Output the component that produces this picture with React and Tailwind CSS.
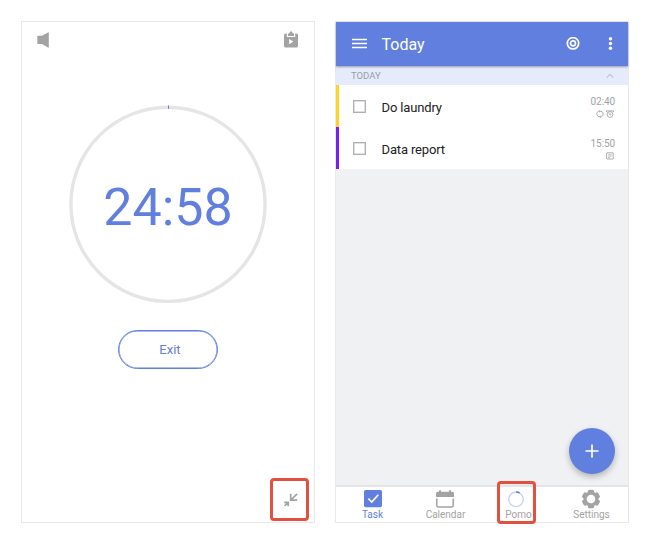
import React from "react";

function SpeakerIcon() {
  return (
    <svg width="12" height="16" viewBox="0 0 12 16" fill="#a3a3a3">
      <path d="M1 3.8h4L11 .4q.8-.3.8.5v14.2q0 .8-.8.4L5 12H1q-.7 0-.7-.7V4.5q0-.7.7-.7Z" />
    </svg>
  );
}

function ClipboardIcon() {
  return (
    <svg width="14" height="17" viewBox="0 0 14 17">
      <rect x="0" y="2.5" width="14" height="14" rx="1.6" fill="#a3a3a3" />
      <path d="M2.8 1.8h8.4v4.200H2.8Z" fill="#fff" />
      <path d="M4 5V3.2q0-1 1-1h.4Q5.600 .2 7 .2t1.600 2H9q1 0 1 1V5Z" fill="#a3a3a3" />
      <path d="M5.100 8v5.200L9.400 10.600Z" fill="#fff" />
    </svg>
  );
}

function CollapseIcon() {
  return (
    <svg width="15" height="15" viewBox="0 0 15 15" fill="none" stroke="#a3a3a3" strokeWidth="1.700">
      <path d="M7.700 .8v6.300h6.500M8 6.800L14.100 .8" />
      <path d="M1.200 9.300h4v4M5 9.500L1.600 12.900" />
    </svg>
  );
}

function GearIcon() {
  return (
    <svg width="20" height="20" viewBox="0 0 20 20">
      <g fill="#a3a3a3">
        <circle cx="10" cy="10" r="7.600" />
        {[0, 60, 120].map((angle) => (
          <rect key={angle} x="6.900" y=".8" width="6.200" height="18.400" rx="1.500" transform={`rotate(${angle} 10 10)`} />
        ))}
      </g>
      <circle cx="10" cy="10" r="4.300" fill="#fff" />
    </svg>
  );
}

function CalendarIcon() {
  return (
    <svg width="18" height="18" viewBox="0 0 18 18">
      <path d="M0 7V3.500q0-1.700 1.700-1.700H3V.3h2v1.500h8V.3h2v1.500h1.300q1.700 0 1.700 1.700V7Z" fill="#a3a3a3" />
      <path d="M.8 8.500v7q0 1.500 1.500 1.500h13.400q1.500 0 1.500-1.500v-7" fill="none" stroke="#a3a3a3" strokeWidth="1.500" />
    </svg>
  );
}

function TaskIcon() {
  return (
    <svg width="18" height="18" viewBox="0 0 18 18">
      <rect width="18" height="17.300" rx="1.700" fill="#617fde" />
      <path d="M4.300 8.500L7.800 12L14.300 4.800" fill="none" stroke="#fff" strokeWidth="1.700" />
    </svg>
  );
}

function PomoIcon() {
  return (
    <svg width="18" height="18" viewBox="0 0 18 18" fill="none" strokeWidth="1.400">
      <circle cx="9" cy="9.300" r="7.300" stroke="#c8d3f7" />
      <path d="M9 2A7.300 7.300 0 0 1 12.600 3" stroke="#617fde" strokeWidth="1.700" />
    </svg>
  );
}

function RepeatIcon() {
  return (
    <svg width="8" height="8" viewBox="0 0 8 8" fill="none" stroke="#a3a3a3" strokeWidth=".9">
      <path d="M3 6.900A3.100 3.100 0 0 1 2.300 1.300H4.400M5 1.100A3.100 3.100 0 0 1 5.700 6.700H3.600M3.500.3l1 1-1 1M4.500 5.700l-1 1 1 1" />
    </svg>
  );
}

function AlarmIcon() {
  return (
    <svg width="8" height="8" viewBox="0 0 8 8" fill="none" stroke="#a3a3a3" strokeWidth=".9">
      <circle cx="4" cy="4.500" r="2.900" />
      <path d="M.5 2.100V.9h2.400M7.500 2.100V.9H5.100M2.800 .9h2.400M3.900 3v1.700h1.400" />
    </svg>
  );
}

function NoteIcon() {
  return (
    <svg width="8" height="8" viewBox="0 0 8 8" fill="none" stroke="#a3a3a3" strokeWidth=".9">
      <rect x=".6" y=".8" width="6.600" height="6.200" rx=".3" />
      <path d="M2.100 2.700h3.600M2.100 4.100h3.600M2.100 5.500h2" strokeWidth=".7" />
    </svg>
  );
}

function TimerScreen() {
  return (
    <section className="relative flex h-[502px] w-[294px] flex-col items-center border border-[#e8e8e8] bg-white">
      <div className="flex h-[83px] w-full items-start justify-between pt-2.5 pr-[16px] pl-[15px]">
        <SpeakerIcon />
        <div className="-mt-px">
          <ClipboardIcon />
        </div>
      </div>
      <div className="grid h-[198px] w-[198px] place-items-center">
        <svg className="col-start-1 row-start-1" width="198" height="198" viewBox="0 0 198 198" fill="none">
          <circle cx="99" cy="99.300" r="97.100" stroke="#e5e5e5" strokeWidth="3.400" />
          <path d="M99.500 .500v3.400" stroke="#617fde" strokeWidth="1" />
        </svg>
        <span className="col-start-1 row-start-1 pt-[7px] text-[52px] leading-none text-[#617fde]">24:58</span>
      </div>
      <button className="mt-[27px] h-[39px] w-[100px] rounded-full border border-[#617fde] pl-[4px] text-[13px] text-[#617fde] shadow-[inset_0_0_0_0.5px_#617fde]">
        Exit
      </button>
      <div className="mt-auto mr-[16px] mb-[14px] self-end">
        <CollapseIcon />
      </div>
      <div className="absolute top-[456px] left-[248px] h-[43px] w-[39px] rounded-[4px] border-[3px] border-[#e2513f]" />
    </section>
  );
}

function TaskRow({ title, time, stripe, icons }) {
  return (
    <li className="flex h-[42px] bg-white">
      <div className={`w-[3px] ${stripe}`} />
      <div className="mt-[15px] ml-[13.500px] h-[13px] w-[13px] border border-[#b0b0b0] shadow-[inset_0_0_0_0.5px_#c4c4c4]" />
      <span className="mt-[14px] ml-4 text-[13px] leading-[18px] tracking-[-0.15px] text-[#222]">{title}</span>
      <div className="mt-[10px] mr-[13px] ml-auto flex flex-col items-end">
        <span className="text-[10px] leading-[14px] tracking-[-0.1px] text-[#a3a3a3]">{time}</span>
        <div className="mt-px mr-px flex gap-[2px]">{icons}</div>
      </div>
    </li>
  );
}

function NavItem({ icon, label, color }) {
  return (
    <div className={`flex w-[73px] flex-col items-center pt-[2px] text-[10px] leading-[12px] ${color}`}>
      <div className="flex h-5 items-start pt-px">{icon}</div>
      <span>{label}</span>
    </div>
  );
}

function TaskScreen() {
  return (
    <section className="relative flex h-[502px] w-[294px] flex-col border border-[#e8e8e8] bg-[#f0f1f3]">
      <header className="z-10 flex h-[44px] shrink-0 items-center bg-[#617fde] pr-[15.500px] pl-[15.500px] text-white shadow-[0_1px_2px_rgba(0,0,0,0.35)]">
        <svg width="15" height="12" viewBox="0 0 15 12" stroke="#fff" strokeWidth="1.700">
          <path d="M0 1.500h15M0 5.500h15M0 9.500h15" />
        </svg>
        <h1 className="ml-[15px] pt-px text-[16px] leading-none">Today</h1>
        <svg className="ml-auto" width="14" height="14" viewBox="0 0 14 14" fill="none" stroke="#fff" strokeWidth="1.700">
          <circle cx="7" cy="6.300" r="5.700" />
          <circle cx="7" cy="6.300" r="2.500" />
        </svg>
        <svg className="ml-[28px]" width="5" height="14" viewBox="0 0 5 14" fill="#fff">
          <circle cx="2.500" cy="1.800" r="1.700" />
          <circle cx="2.500" cy="6.500" r="1.700" />
          <circle cx="2.500" cy="11.200" r="1.700" />
        </svg>
      </header>
      <div className="flex h-[19px] shrink-0 items-center justify-between bg-[#e6ebfb] pr-[14px] pl-[15px] text-[9.500px] text-[#9a9ca8]">
        <span className="pt-px">TODAY</span>
        <svg width="8" height="6" viewBox="0 0 8 6" fill="none" stroke="#c0c2c8" strokeWidth="1.100">
          <path d="M.7 4.600L4 1.300L7.300 4.600" />
        </svg>
      </div>
      <ul>
        <TaskRow title="Do laundry" time="02:40" stripe="bg-[#ffd324]" icons={<><RepeatIcon /><AlarmIcon /></>} />
        <TaskRow title="Data report" time="15:50" stripe="bg-[#7a1cf5]" icons={<NoteIcon />} />
      </ul>
      <button className="absolute top-[406px] left-[233px] grid h-[46px] w-[46px] place-items-center rounded-full bg-[#617fde] shadow-[0_3px_6px_rgba(0,0,0,0.25)]">
        <svg width="14" height="14" viewBox="0 0 14 14" stroke="#fff" strokeWidth="1.700">
          <path d="M7 .5v13M.5 7h13" />
        </svg>
      </button>
      <nav className="mt-auto flex h-[37px] border-t-2 border-[#e4e5e7] bg-white">
        <NavItem icon={<TaskIcon />} label="Task" color="text-[#617fde]" />
        <NavItem icon={<div className="mr-px"><CalendarIcon /></div>} label="Calendar" color="text-[#a3a3a3]" />
        <NavItem icon={<div className="mr-[5px]"><PomoIcon /></div>} label="Pomo" color="text-[#a3a3a3]" />
        <NavItem icon={<div className="-mt-px mr-px"><GearIcon /></div>} label="Settings" color="text-[#a3a3a3]" />
      </nav>
      <div className="absolute top-[459px] left-[161px] h-[43px] w-[39px] rounded-[4px] border-[3px] border-[#e2513f]" />
    </section>
  );
}

export default function App() {
  return (
    <main className="flex h-[544px] w-[650px] gap-5 bg-white pt-[21px] pl-[21px] font-[Roboto,sans-serif]">
      <TimerScreen />
      <TaskScreen />
    </main>
  );
}
